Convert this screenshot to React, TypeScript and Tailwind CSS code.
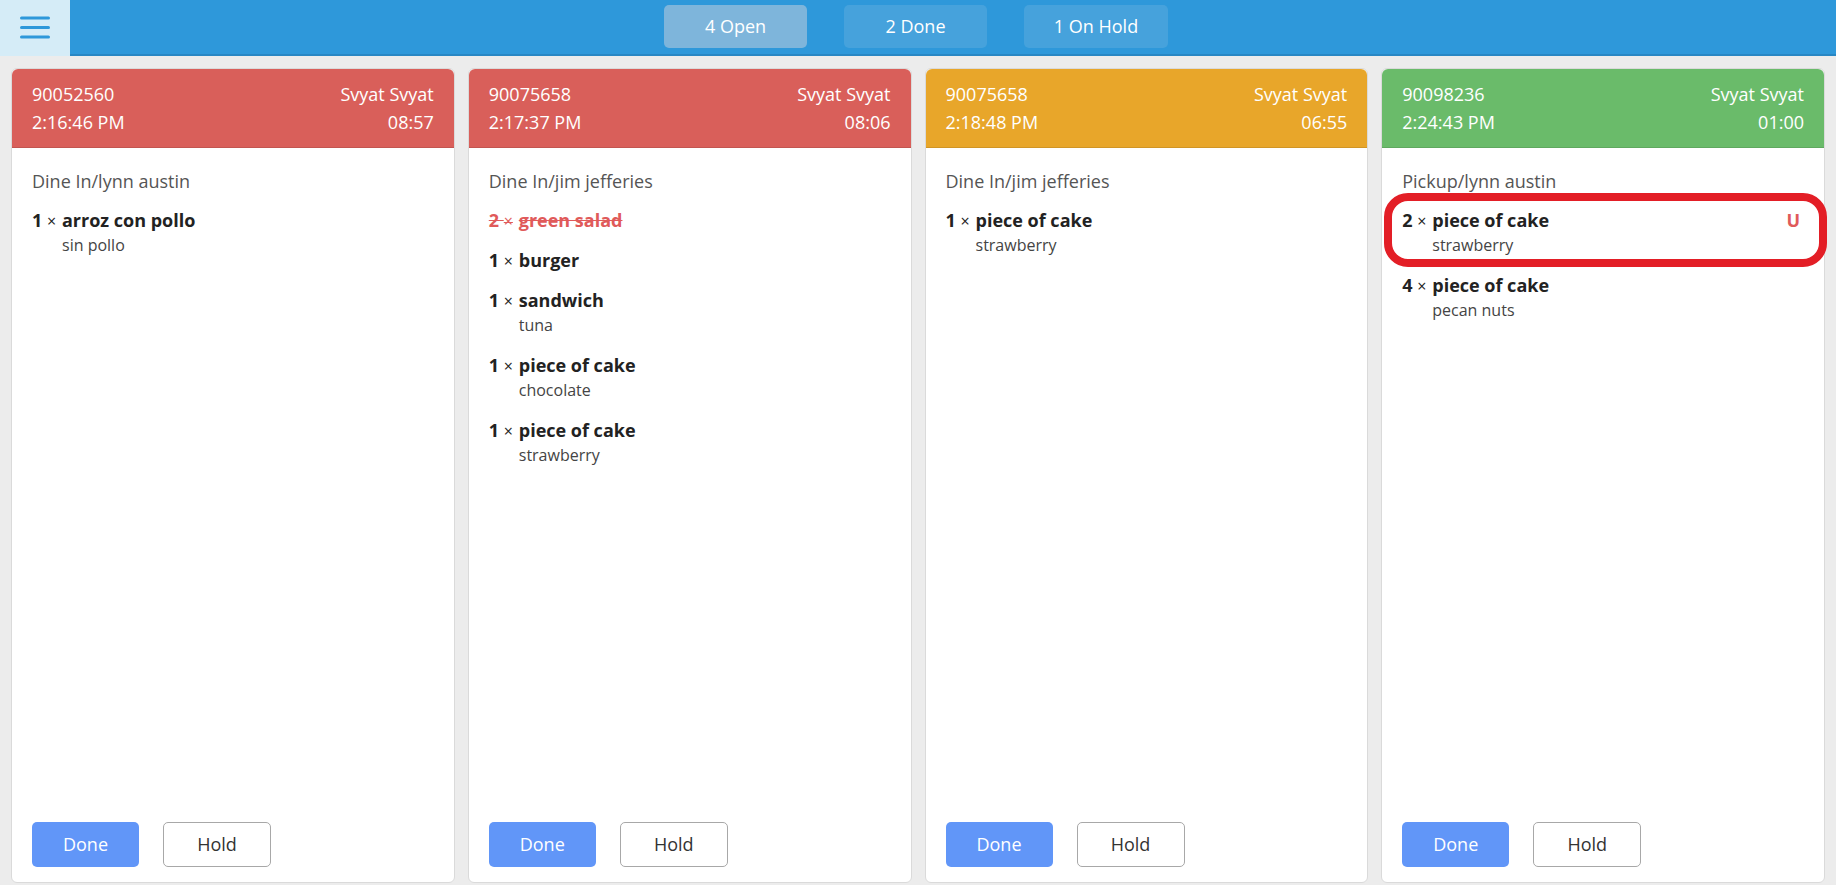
import React from "react";

type Item = { qty: number; name: string; mod?: string; struck?: boolean; flag?: string; circled?: boolean };
type Order = {
  id: string;
  time: string;
  server: string;
  elapsed: string;
  color: string;
  type: string;
  items: Item[];
};

const orders: Order[] = [
  {
    id: "90052560",
    time: "2:16:46 PM",
    server: "Svyat Svyat",
    elapsed: "08:57",
    color: "bg-[#d95f5a]",
    type: "Dine In/lynn austin",
    items: [{ qty: 1, name: "arroz con pollo", mod: "sin pollo" }],
  },
  {
    id: "90075658",
    time: "2:17:37 PM",
    server: "Svyat Svyat",
    elapsed: "08:06",
    color: "bg-[#d95f5a]",
    type: "Dine In/jim jefferies",
    items: [
      { qty: 2, name: "green salad", struck: true },
      { qty: 1, name: "burger" },
      { qty: 1, name: "sandwich", mod: "tuna" },
      { qty: 1, name: "piece of cake", mod: "chocolate" },
      { qty: 1, name: "piece of cake", mod: "strawberry" },
    ],
  },
  {
    id: "90075658",
    time: "2:18:48 PM",
    server: "Svyat Svyat",
    elapsed: "06:55",
    color: "bg-[#e8a62a]",
    type: "Dine In/jim jefferies",
    items: [{ qty: 1, name: "piece of cake", mod: "strawberry" }],
  },
  {
    id: "90098236",
    time: "2:24:43 PM",
    server: "Svyat Svyat",
    elapsed: "01:00",
    color: "bg-[#6abb6a]",
    type: "Pickup/lynn austin",
    items: [
      { qty: 2, name: "piece of cake", mod: "strawberry", flag: "U", circled: true },
      { qty: 4, name: "piece of cake", mod: "pecan nuts" },
    ],
  },
];

function ItemRow({ item }: { item: Item }) {
  return (
    <div className="relative mb-[14px]">
      {item.circled && (
        <div className="pointer-events-none absolute left-[-18px] right-[-23px] top-[-14px] bottom-[-9px] rounded-[24px] border-[8px] border-[#e31e26]" />
      )}
      <div
        className={
          "flex h-[26px] text-[18px] leading-[26px] font-bold " +
          (item.struck ? "text-[#e05a5a] line-through" : "text-[#222]")
        }
      >
        <span className="w-[30px] shrink-0 whitespace-nowrap">
          {item.qty} <span className="font-normal text-[16px] leading-[16px]">×</span>
        </span>
        <span>{item.name}</span>
        {item.flag && (
          <span className="ml-auto pr-[4px] text-[#e05a5a] font-bold">{item.flag}</span>
        )}
      </div>
      {item.mod && (
        <div className="pl-[30px] text-[16px] leading-[25px] text-[#444]">{item.mod}</div>
      )}
    </div>
  );
}

function Card({ order }: { order: Order }) {
  return (
    <div className="flex min-w-0 flex-1 flex-col overflow-visible rounded-[6px] border border-[#dadada] bg-white">
      <div
        className={
          order.color +
          " rounded-t-[6px] border-b border-black/10 px-[20px] py-[11px] text-[18px] leading-[28px] text-white"
        }
      >
        <div className="flex justify-between">
          <span>{order.id}</span>
          <span>{order.server}</span>
        </div>
        <div className="flex justify-between">
          <span>{order.time}</span>
          <span>{order.elapsed}</span>
        </div>
      </div>
      <div className="flex flex-1 flex-col px-[20px] pt-[20px] pb-[15px]">
        <div className="mb-[13px] text-[18px] leading-[26px] text-[#555]">{order.type}</div>
        <div className="flex-1">
          {order.items.map((it, i) => (
            <ItemRow key={i} item={it} />
          ))}
        </div>
        <div className="flex gap-[24px]">
          <button className="h-[45px] w-[107px] rounded-[5px] bg-[#6196f8] text-[18px] text-white">
            Done
          </button>
          <button className="h-[45px] w-[108px] rounded-[5px] border border-[#a8a8a8] bg-white text-[18px] text-[#333]">
            Hold
          </button>
        </div>
      </div>
    </div>
  );
}

export default function App() {
  return (
    <div
      className="flex h-[885px] w-full flex-col overflow-hidden bg-[#ececec]"
      style={{ fontFamily: '"Open Sans", "Noto Sans", sans-serif' }}
    >
      <div className="flex h-[56px] shrink-0">
        <div className="flex h-[56px] w-[70px] items-center justify-center bg-[#d5ecf7]">
          <svg width="30" height="24" viewBox="0 0 30 24">
            <g stroke="#2e98da" strokeWidth="3" strokeLinecap="round">
              <line x1="1.5" y1="2" x2="28.5" y2="2" />
              <line x1="1.5" y1="11.5" x2="28.5" y2="11.5" />
              <line x1="1.5" y1="21" x2="28.5" y2="21" />
            </g>
          </svg>
        </div>
        <div className="flex flex-1 items-start border-b-[2px] border-[#2887c4] bg-[#2e98da] pl-[594px] pt-[5px]">
          <div className="flex gap-[37px]">
            <div className="flex h-[43px] w-[143px] items-center justify-center rounded-[5px] bg-[#7eb5db] text-[18px] text-white">
              4 Open
            </div>
            <div className="flex h-[43px] w-[143px] items-center justify-center rounded-[5px] bg-[#46a2dc] text-[18px] text-white">
              2 Done
            </div>
            <div className="flex h-[43px] w-[144px] items-center justify-center rounded-[5px] bg-[#46a2dc] text-[18px] text-white">
              1 On Hold
            </div>
          </div>
        </div>
      </div>
      <div className="flex min-h-0 flex-1 gap-[13px] px-[11px] pt-[12px] pb-[2px]">
        {orders.map((o, i) => (
          <Card key={i} order={o} />
        ))}
      </div>
    </div>
  );
}
